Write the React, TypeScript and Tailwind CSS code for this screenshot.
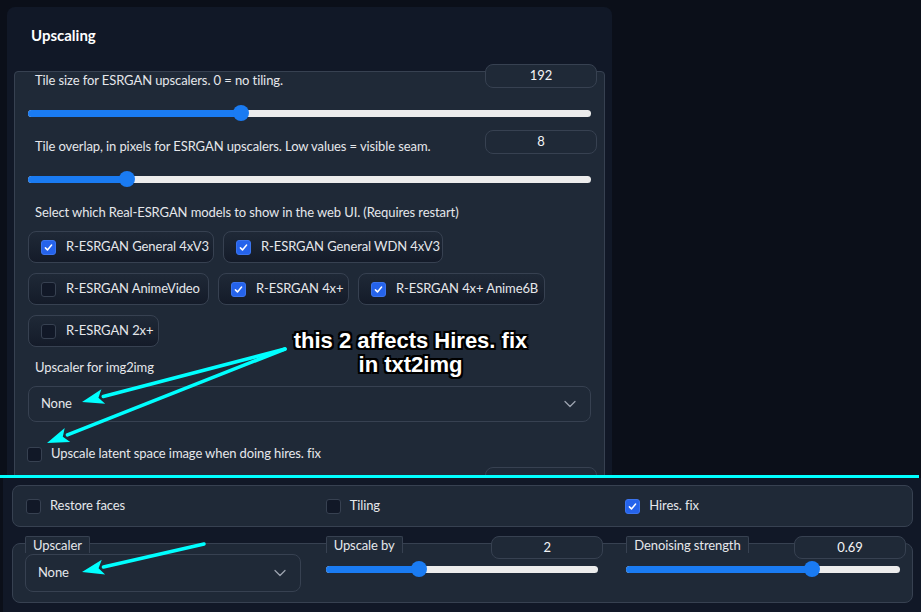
import React from "react";
import { ChevronDown } from "lucide-react";

const ui = "font-['Lato','Noto_Sans',sans-serif] tracking-[-0.1px]";

const models = [
  { name: "R-ESRGAN General 4xV3", checked: true, w: "w-[186px]" },
  { name: "R-ESRGAN General WDN 4xV3", checked: true, w: "w-[220px]" },
  { name: "R-ESRGAN AnimeVideo", checked: false, w: "w-[181px]" },
  { name: "R-ESRGAN 4x+", checked: true, w: "w-[131px]" },
  { name: "R-ESRGAN 4x+ Anime6B", checked: true, w: "w-[187px]" },
  { name: "R-ESRGAN 2x+", checked: false, w: "w-[131px]" },
];

const Check = ({ checked }: { checked: boolean }) => (
  <span
    className={`flex h-[15px] w-[15px] shrink-0 items-center justify-center rounded-[3px] border ${
      checked ? "border-[#3b74ee] bg-[#2563eb]" : "border-[#374151] bg-[#111827]"
    }`}
  >
    {checked && (
      <svg viewBox="0 0 16 16" className="h-[11px] w-[11px]">
        <path
          d="M3.5 8.5l3 3 6-7"
          fill="none"
          stroke="white"
          strokeWidth="2.2"
          strokeLinecap="round"
          strokeLinejoin="round"
        />
      </svg>
    )}
  </span>
);

const Slider = ({ pct }: { pct: number }) => (
  <div className="relative flex h-4 items-center">
    <div className="h-[7px] w-full overflow-hidden rounded-full bg-[#ececec]">
      <div className="h-full bg-[#1a7bf2]" style={{ width: `${pct}%` }} />
    </div>
    <div
      className="absolute top-0 h-4 w-4 -translate-x-1/2 rounded-full bg-[#1a7bf2]"
      style={{ left: `${pct}%` }}
    />
  </div>
);

const NumBox = ({ value, h = "h-[24px]" }: { value: string; h?: string }) => (
  <div
    className={`flex ${h} w-[112px] shrink-0 items-center justify-center rounded-lg border border-[#374151] bg-[#1f2937] text-[13px] text-[#f3f4f6]`}
  >
    {value}
  </div>
);

const Dropdown = ({ pl }: { pl: string }) => (
  <div
    className={`flex h-full items-center justify-between rounded-lg border border-[#374151] bg-[#1f2937] ${pl} pr-[10px] text-[13px] text-[#e5e7eb]`}
  >
    <span>None</span>
    <ChevronDown size={20} strokeWidth={1.5} className="text-[#9ca3af]" />
  </div>
);

const Tab = ({ children }: { children: React.ReactNode }) => (
  <div className="h-[17px] shrink-0 rounded-t-[2px] border border-b-0 border-[#374151] bg-[#1f2937] px-[7px] text-[13px] leading-[16px] text-[#e5e7eb]">
    {children}
  </div>
);

const Arrow = ({ x1, y1, x2, y2 }: { x1: number; y1: number; x2: number; y2: number }) => {
  const dx = x1 - x2;
  const dy = y1 - y2;
  const len = Math.hypot(dx, dy);
  const ux = dx / len;
  const uy = dy / len;
  const bx = x2 + ux * 22;
  const by = y2 + uy * 22;
  const px = -uy * 7.5;
  const py = ux * 7.5;
  return (
    <g>
      <line x1={x1} y1={y1} x2={bx} y2={by} stroke="#00ffff" strokeWidth="3.5" strokeLinecap="round" />
      <polygon
        points={`${x2},${y2} ${bx + px},${by + py} ${x2 + ux * 17},${y2 + uy * 17} ${bx - px},${by - py}`}
        fill="#00ffff"
      />
    </g>
  );
};

export default function App() {
  return (
    <div className={`relative flex h-[612px] w-[921px] flex-col overflow-hidden bg-[#0b0f19] ${ui}`}>
      {/* settings panel */}
      <div className="h-[475px] shrink-0 overflow-hidden pl-[7px] pt-[7px]">
        <div className="h-[520px] w-[605px] rounded-lg bg-[#111827] px-[7px] pt-[18px]">
          <div className="pl-[17px] text-[15px] font-bold leading-5 tracking-normal text-white">Upscaling</div>
          <div className="mt-[26px] h-[500px] rounded-t-[4px] border border-[#374151] bg-[#1f2937] text-[13px] text-[#e5e7eb]">
            <div className="-mt-[8px] flex h-[24px] items-start justify-between pl-[20px] pr-[7px]">
              <span className="mt-[7px] leading-[18px]">Tile size for ESRGAN upscalers. 0 = no tiling.</span>
              <NumBox value="192" />
            </div>
            <div className="mt-[17px] px-[13px]">
              <Slider pct={37.8} />
            </div>
            <div className="mt-[9px] flex h-[24px] items-start justify-between pl-[20px] pr-[7px]">
              <span className="mt-[7px] leading-[18px]">
                Tile overlap, in pixels for ESRGAN upscalers. Low values = visible seam.
              </span>
              <NumBox value="8" />
            </div>
            <div className="mt-[17px] px-[13px]">
              <Slider pct={17.6} />
            </div>
            <div className="mt-[16px] pl-[20px] leading-[18px]">
              Select which Real-ESRGAN models to show in the web UI. (Requires restart)
            </div>
            <div className="mt-[10px] flex flex-wrap gap-x-[9px] gap-y-[10px] px-[13px]">
              {models.map((m) => (
                <div
                  key={m.name}
                  className={`flex h-[32px] ${m.w} items-center gap-[10px] rounded-lg border border-[#374151] bg-gradient-to-t from-[#141b29] to-[#1f2937] pl-[12px]`}
                >
                  <Check checked={m.checked} />
                  <span className="whitespace-nowrap">{m.name}</span>
                </div>
              ))}
            </div>
            <div className="mt-[11px] pl-[20px] leading-[18px]">Upscaler for img2img</div>
            <div className="mt-[10px] h-[36px] px-[13px]">
              <Dropdown pl="pl-[12px]" />
            </div>
            <div className="mt-[24px] flex h-[16px] items-center gap-[9px] pl-[12px]">
              <Check checked={false} />
              <span>Upscale latent space image when doing hires. fix</span>
            </div>
            <div className="mt-[5px] flex justify-end pr-[7px]">
              <NumBox value="" />
            </div>
          </div>
        </div>
      </div>

      <div className="h-[3px] w-[919px] shrink-0 bg-[#00ffff]" />

      {/* txt2img hires section */}
      <div className="ml-[3px] flex-1 bg-[#111827] pl-[9px] pt-[7px] text-[13px] text-[#e5e7eb]">
        <div className="grid h-[42px] w-[901px] grid-cols-3 rounded-lg border border-[#374151] bg-[#1f2937]">
          {[
            ["Restore faces", false],
            ["Tiling", false],
            ["Hires. fix", true],
          ].map(([label, on]) => (
            <div key={label as string} className="flex items-center gap-[9px] pl-[13px]">
              <Check checked={on as boolean} />
              <span>{label}</span>
            </div>
          ))}
        </div>

        <div className="mt-[16px] grid h-[60px] w-[901px] grid-cols-3 rounded-lg border border-[#374151] bg-[#1f2937]">
          <div className="flex flex-col pl-[12px] pr-[12px]">
            <div className="-mt-[8px] flex">
              <Tab>Upscaler</Tab>
            </div>
            <div className="mt-[1px] h-[38px]">
              <Dropdown pl="pl-[12px]" />
            </div>
          </div>
          <div className="flex flex-col pl-[13px] pr-[9px]">
            <div className="-mt-[8px] flex items-start justify-between">
              <Tab>Upscale by</Tab>
              <NumBox value="2" h="h-[23px]" />
            </div>
            <div className="mr-[5px] mt-[2px]">
              <Slider pct={34.4} />
            </div>
          </div>
          <div className="flex flex-col pl-[14px] pr-[6px]">
            <div className="-mt-[8px] flex items-start justify-between">
              <Tab>Denoising strength</Tab>
              <NumBox value="0.69" h="h-[23px]" />
            </div>
            <div className="mr-[6px] mt-[2px]">
              <Slider pct={67.9} />
            </div>
          </div>
        </div>
      </div>

      {/* annotation overlay */}
      <svg className="pointer-events-none absolute left-0 top-0" width="921" height="612">
        <Arrow x1={285} y1={349} x2={82} y2={402} />
        <Arrow x1={285} y1={349} x2={47} y2={443} />
        <Arrow x1={204} y1={544} x2={82} y2={572} />
      </svg>
      <div className="pointer-events-none absolute left-[285px] top-[329px] w-[251px] text-center font-['Liberation_Sans',Arial,sans-serif] text-[22px] font-bold leading-[24px] tracking-normal text-white [text-shadow:-2px_-2px_0_#000,2px_-2px_0_#000,-2px_2px_0_#000,2px_2px_0_#000,0_-2px_0_#000,0_2px_0_#000,-2px_0_0_#000,2px_0_0_#000]">
        this 2 affects Hires. fix
        <br />
        in txt2img
      </div>
    </div>
  );
}
